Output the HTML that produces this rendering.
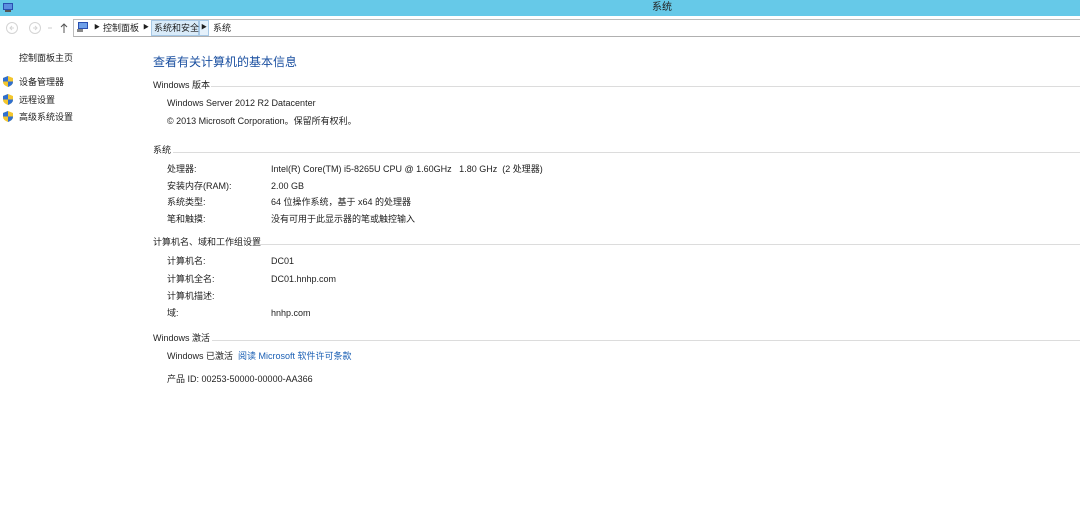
<!DOCTYPE html>
<html><head><meta charset="utf-8"><style>
*{margin:0;padding:0;box-sizing:border-box}
body{width:1080px;height:520px;background:#fff;position:relative;overflow:hidden;font-family:"Liberation Sans","Noto Sans CJK SC",sans-serif;font-size:9px;color:#1e1e1e}
.a{position:absolute;white-space:nowrap;line-height:12px}
.tb{position:absolute;left:0;top:0;width:1080px;height:16px;background:#66c9e8}
.addr{position:absolute;left:73px;top:19px;width:1007px;height:18px;border-top:1px solid #bcbcbc;border-bottom:1px solid #b0b0b0;border-left:1px solid #bcbcbc}
.hl{position:absolute;height:1px;background:#dcdcdc;right:0}
.lnk{color:#1a5fb4}
.sh{position:absolute;width:10px;height:11px}
</style></head><body>
<div class="tb"></div>
<svg class="a" style="left:3px;top:3px" width="10" height="9"><rect x="0" y="0" width="10" height="7" fill="#2a4fb0"/><rect x="1" y="1" width="8" height="5" fill="#5a8ee0"/><rect x="2" y="7" width="6" height="2" fill="#555"/></svg>
<div class="a" style="left:652px;top:2px;font-size:10px;color:#222">系统</div>
<!-- nav -->
<svg class="a" style="left:4px;top:21px" width="70" height="14">
<circle cx="8" cy="7" r="5.5" fill="none" stroke="#d4d4d4"/><path d="M10 7H6M8 5L6 7 8 9" stroke="#d4d4d4" fill="none"/>
<circle cx="31" cy="7" r="5.5" fill="none" stroke="#d4d4d4"/><path d="M29 7H33M31 5L33 7 31 9" stroke="#d4d4d4" fill="none"/>
<path d="M44 7h4" stroke="#ccc"/>
<path d="M60 12V3M57 6l3-3 3 3" stroke="#555" fill="none"/>
</svg>
<div class="addr"></div>
<svg class="a" style="left:77px;top:22px" width="12" height="11"><rect x="1" y="0" width="10" height="7" fill="#2a4fb0"/><rect x="2" y="1" width="8" height="5" fill="#6fa0e8"/><rect x="0" y="7" width="6" height="3" fill="#888"/></svg>
<div class="a" style="left:94px;top:22px;font-size:6px">▶</div>
<div class="a" style="left:103px;top:22px">控制面板</div>
<div class="a" style="left:143px;top:22px;font-size:6px">▶</div>
<div style="position:absolute;left:151px;top:20px;width:48px;height:16px;background:#d9ebf9;border:1px solid #a6c8e6"></div>
<div class="a" style="left:154px;top:22px">系统和安全</div>
<div style="position:absolute;left:199px;top:20px;width:10px;height:16px;background:#e5f1fb;border:1px solid #a6c8e6"></div>
<div class="a" style="left:201px;top:22px;font-size:6px">▶</div>
<div class="a" style="left:213px;top:22px">系统</div>
<!-- left -->
<div class="a" style="left:19px;top:52px">控制面板主页</div>
<svg class="sh" style="left:3px;top:76px" viewBox="0 0 10 11"><path d="M5 0L10 2V6Q10 9 5 11Q0 9 0 6V2Z" fill="#f3c62e"/><path d="M5 0V5.5H0V2Z M5 5.5H10V6Q10 9 5 11Z" fill="#2f6fd0"/></svg>
<div class="a" style="left:19px;top:76px">设备管理器</div>
<svg class="sh" style="left:3px;top:94px" viewBox="0 0 10 11"><path d="M5 0L10 2V6Q10 9 5 11Q0 9 0 6V2Z" fill="#f3c62e"/><path d="M5 0V5.5H0V2Z M5 5.5H10V6Q10 9 5 11Z" fill="#2f6fd0"/></svg>
<div class="a" style="left:19px;top:94px">远程设置</div>
<svg class="sh" style="left:3px;top:111px" viewBox="0 0 10 11"><path d="M5 0L10 2V6Q10 9 5 11Q0 9 0 6V2Z" fill="#f3c62e"/><path d="M5 0V5.5H0V2Z M5 5.5H10V6Q10 9 5 11Z" fill="#2f6fd0"/></svg>
<div class="a" style="left:19px;top:111px">高级系统设置</div>
<!-- main -->
<div class="a" style="left:153px;top:55px;font-size:12px;line-height:15px;color:#1a4fa0">查看有关计算机的基本信息</div>
<div class="a" style="left:153px;top:79px">Windows 版本</div><div class="hl" style="left:211px;top:86px"></div>
<div class="a" style="left:167px;top:97px">Windows Server 2012 R2 Datacenter</div>
<div class="a" style="left:167px;top:115px">© 2013 Microsoft Corporation。保留所有权利。</div>
<div class="a" style="left:153px;top:144px">系统</div><div class="hl" style="left:173px;top:152px"></div>
<div class="a" style="left:167px;top:163px">处理器:</div><div class="a" style="left:271px;top:163px">Intel(R) Core(TM) i5-8265U CPU @ 1.60GHz &nbsp; 1.80 GHz &nbsp;(2 处理器)</div>
<div class="a" style="left:167px;top:180px">安装内存(RAM):</div><div class="a" style="left:271px;top:180px">2.00 GB</div>
<div class="a" style="left:167px;top:196px">系统类型:</div><div class="a" style="left:271px;top:196px">64 位操作系统，基于 x64 的处理器</div>
<div class="a" style="left:167px;top:213px">笔和触摸:</div><div class="a" style="left:271px;top:213px">没有可用于此显示器的笔或触控输入</div>
<div class="a" style="left:153px;top:236px">计算机名、域和工作组设置</div><div class="hl" style="left:256px;top:244px"></div>
<div class="a" style="left:167px;top:255px">计算机名:</div><div class="a" style="left:271px;top:255px">DC01</div>
<div class="a" style="left:167px;top:273px">计算机全名:</div><div class="a" style="left:271px;top:273px">DC01.hnhp.com</div>
<div class="a" style="left:167px;top:290px">计算机描述:</div>
<div class="a" style="left:167px;top:307px">域:</div><div class="a" style="left:271px;top:307px">hnhp.com</div>
<div class="a" style="left:153px;top:332px">Windows 激活</div><div class="hl" style="left:212px;top:340px"></div>
<div class="a" style="left:167px;top:350px">Windows 已激活 &nbsp;<span class="lnk">阅读 Microsoft 软件许可条款</span></div>
<div class="a" style="left:167px;top:373px">产品 ID: 00253-50000-00000-AA366</div>
</body></html>
